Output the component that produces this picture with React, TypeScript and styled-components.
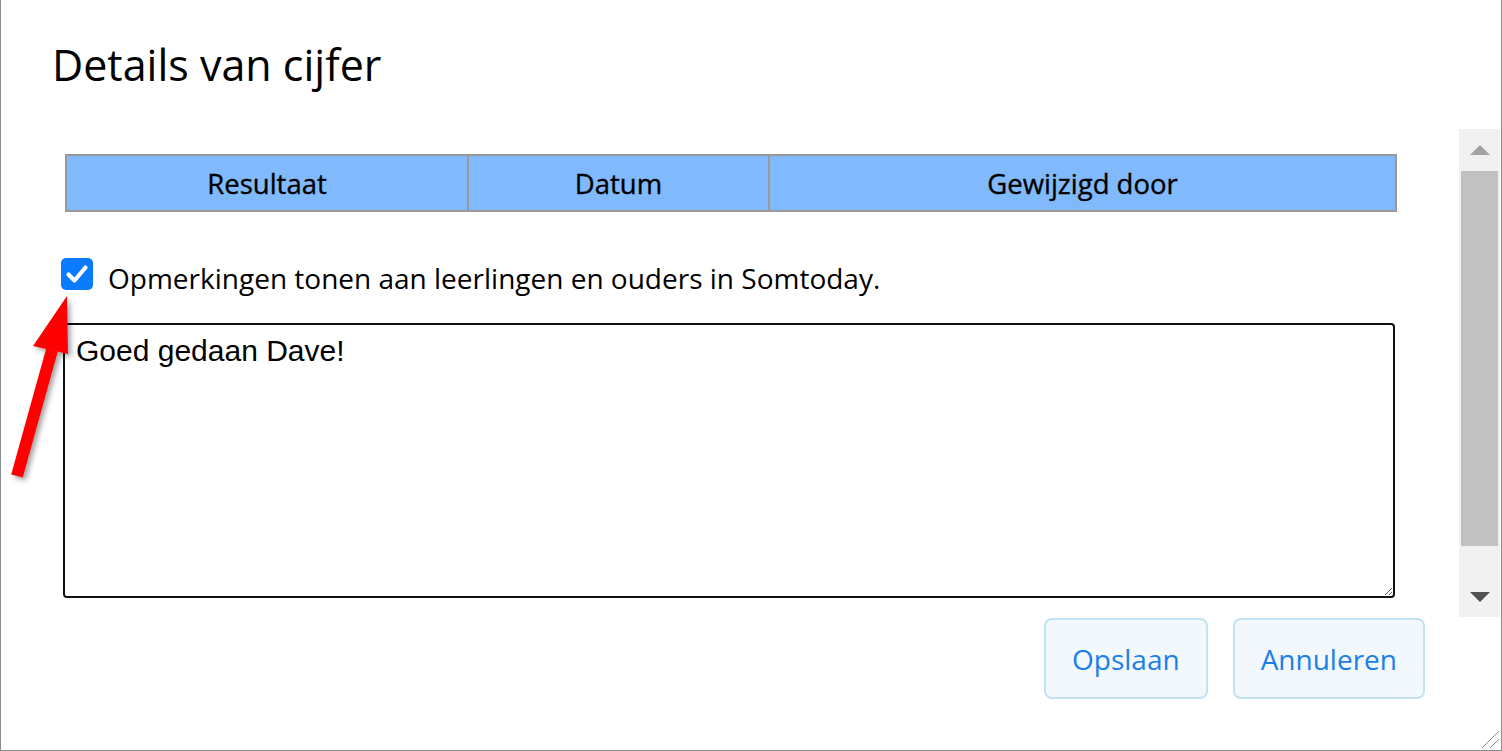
import React from 'react';
import styled, {createGlobalStyle} from 'styled-components';

const GlobalStyle = createGlobalStyle`
  html, body {
    margin: 0;
    padding: 0;
    background: #ffffff;
    overflow: hidden;
  }

  body {
    font-family: "Open Sans", "Noto Sans", sans-serif;
    color: #000;
  }
`

const Dialog = styled.div`
  position: relative;
  width: 1502px;
  height: 751px;
  box-sizing: border-box;
  border: 1px solid #8c8c8c;
  border-top: none;
  background: #fff;
  display: flex;
  flex-direction: column;
`

const Header = styled.div`
  height: 129px;
  box-sizing: border-box;
  padding: 35px 0 0 51px;
`

const Title = styled.h1`
  margin: 0;
  font-size: 43px;
  font-weight: 400;
  line-height: normal;
  color: #000;
`

const Body = styled.div`
  display: flex;
  height: 488px;
`

const Content = styled.div`
  flex: 1;
  overflow: hidden;
  padding: 25px 0 0 60px;
`

const HistoryTable = styled.table`
  width: 1330px;
  margin-left: 4px;
  border-collapse: collapse;
  border: 2px solid #999;
  table-layout: fixed;
`

const HeadCell = styled.th`
  height: 54px;
  padding: 0;
  border: 2px solid #999;
  background: #80bafc;
  font-size: 27.5px;
  font-weight: 400;
  color: #000;
  text-align: center;
  -webkit-text-stroke: 0.35px #000;
`

const CheckRow = styled.label`
  display: flex;
  align-items: flex-start;
  gap: 15px;
  margin-top: 46px;
`

const CheckBox = styled.span`
  width: 32px;
  height: 32px;
  border-radius: 5px;
  background: #0a7bff;
  display: flex;
  align-items: center;
  justify-content: center;
  flex-shrink: 0;
`

const CheckLabel = styled.span`
  margin-top: 1px;
  font-size: 28px;
  line-height: normal;
  color: #000;
`

const Remarks = styled.textarea`
  display: block;
  width: 1332px;
  height: 275px;
  margin: 26px 0 0 2px;
  box-sizing: border-box;
  border: 2px solid #111;
  border-radius: 4px;
  padding: 9px 11px;
  font-family: "Liberation Sans", Arial, sans-serif;
  font-size: 30px;
  color: #000;
  outline: none;
`

const Scrollbar = styled.div`
  width: 41px;
  margin-right: 1px;
  background: #f1f1f1;
  display: flex;
  flex-direction: column;
`

const ScrollButton = styled.div<{ $size: number }>`
  height: ${props => props.$size}px;
  display: flex;
  align-items: center;
  justify-content: center;
`

const Triangle = styled.span<{ $down?: boolean; $color: string }>`
  width: 0;
  height: 0;
  border-left: 10px solid transparent;
  border-right: 10px solid transparent;
  ${props => props.$down
    ? `border-top: 10px solid ${props.$color};`
    : `border-bottom: 10px solid ${props.$color};`}
`

const Track = styled.div`
  flex: 1;
  padding: 0 2px;
`

const Thumb = styled.div`
  height: 375px;
  background: #c1c1c1;
`

const Footer = styled.div`
  display: flex;
  justify-content: flex-end;
  gap: 25px;
  padding: 1px 76px 0 0;
`

const ActionButton = styled.button`
  height: 81px;
  box-sizing: border-box;
  padding: 0 26px;
  border: 2px solid #c0e2f2;
  border-radius: 8px;
  background: #f3f8fd;
  color: #1a7fe8;
  font-family: "Open Sans", "Noto Sans", sans-serif;
  font-size: 28px;
  cursor: pointer;
`

const Grip = styled.svg`
  position: absolute;
  right: 1px;
  bottom: 1px;
`

const Annotation = styled.svg`
  position: absolute;
  left: 0;
  top: 280px;
  pointer-events: none;
`

const columns = [
    {title: 'Resultaat', width: 402},
    {title: 'Datum', width: 301},
    {title: 'Gewijzigd door', width: 627},
];

const App = () => {
    return (
        <>
            <GlobalStyle/>
            <Dialog>
                <Header>
                    <Title>Details van cijfer</Title>
                </Header>

                <Body>
                    <Content>
                        <HistoryTable>
                            <colgroup>
                                {columns.map(c => <col key={c.title} style={{width: c.width}}/>)}
                            </colgroup>
                            <thead>
                            <tr>
                                {columns.map(c => <HeadCell key={c.title}>{c.title}</HeadCell>)}
                            </tr>
                            </thead>
                        </HistoryTable>

                        <CheckRow>
                            <CheckBox>
                                <svg width="24" height="24" viewBox="0 0 24 24">
                                    <path d="M3.5 12.5 L9.5 18.5 L20.5 5.5" fill="none" stroke="#fff" strokeWidth="4.2"
                                          strokeLinecap="round" strokeLinejoin="round"/>
                                </svg>
                            </CheckBox>
                            <CheckLabel>Opmerkingen tonen aan leerlingen en ouders in Somtoday.</CheckLabel>
                        </CheckRow>

                        <Remarks defaultValue="Goed gedaan Dave!"/>
                    </Content>

                    <Scrollbar>
                        <ScrollButton $size={42}>
                            <Triangle $color="#a3a3a3"/>
                        </ScrollButton>
                        <Track>
                            <Thumb/>
                        </Track>
                        <ScrollButton $size={41}>
                            <Triangle $down $color="#505050"/>
                        </ScrollButton>
                    </Scrollbar>
                </Body>

                <Footer>
                    <ActionButton>Opslaan</ActionButton>
                    <ActionButton>Annuleren</ActionButton>
                </Footer>

                <Grip width="20" height="20" viewBox="0 0 20 20">
                    <line x1="19" y1="2" x2="2" y2="19" stroke="#888" strokeWidth="1"/>
                    <line x1="19" y1="10" x2="10" y2="19" stroke="#888" strokeWidth="1"/>
                </Grip>

                <Annotation width="100" height="215" viewBox="0 280 100 215">
                    <defs>
                        <filter id="arrowShadow" x="-50%" y="-20%" width="200%" height="140%">
                            <feDropShadow dx="3" dy="3" stdDeviation="2.5" floodColor="#000" floodOpacity="0.35"/>
                        </filter>
                    </defs>
                    <g filter="url(#arrowShadow)" fill="#ff0000">
                        <polygon points="10.2,474.4 21.8,477.6 56.8,351.6 45.2,348.4"/>
                        <polygon points="66,296 32,346 67,354"/>
                    </g>
                </Annotation>
            </Dialog>
        </>
    );
};

export default App;
